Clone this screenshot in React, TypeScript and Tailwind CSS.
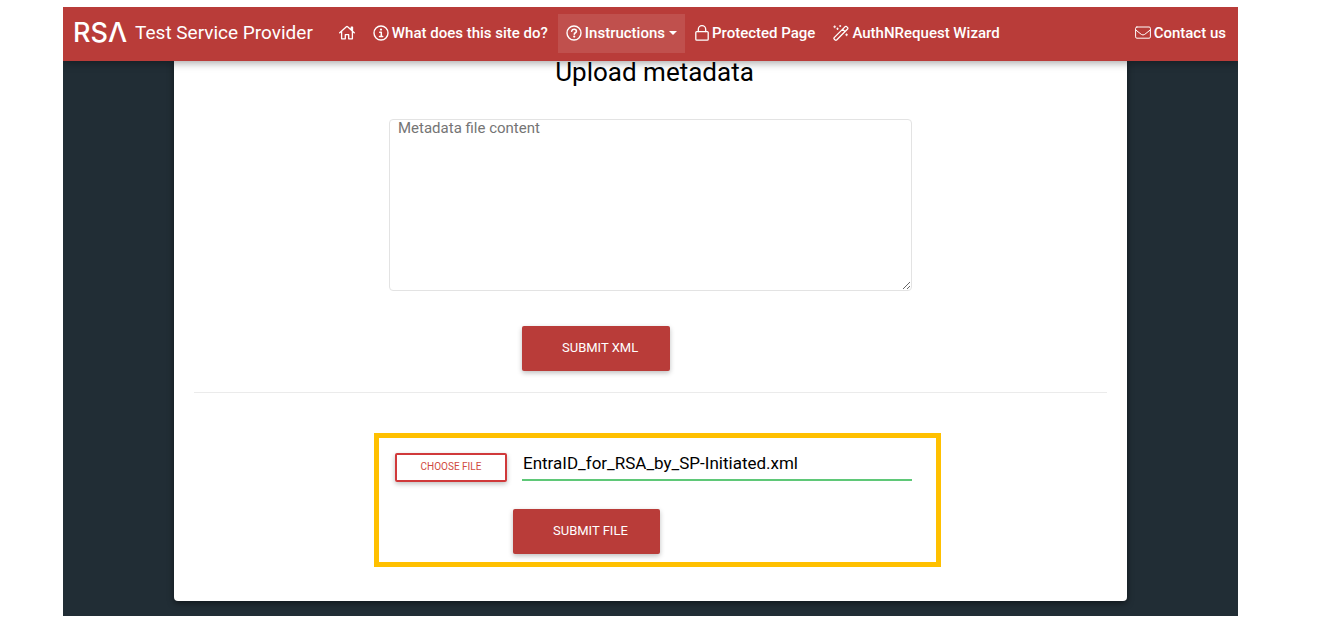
import { useState } from 'react'
import type { ReactNode } from 'react'

interface IconProps {
  children: ReactNode
  width?: number
  className?: string
}

function Icon({ children, width = 16, className = '' }: IconProps) {
  return (
    <svg
      width={width}
      height="16"
      viewBox={`0 0 ${width} 16`}
      fill="none"
      stroke="currentColor"
      strokeWidth="1.3"
      strokeLinecap="round"
      strokeLinejoin="round"
      className={`shrink-0 ${className}`}
      aria-hidden="true"
    >
      {children}
    </svg>
  )
}

function HomeIcon() {
  return (
    <Icon>
      <path d="M.7 7.700 7.400 1.700q.6-.5 1.200 0l6.700 6M2.600 6.500v7.300h3.700V9.700h3.400v4.100h3.700V6.500M12.300 4.500V2.100h1.200V5.500" />
    </Icon>
  )
}

function InfoIcon() {
  return (
    <Icon>
      <circle cx="8" cy="8" r="7" strokeWidth="1.4" />
      <path d="M6.700 7.200h1.600v4M6.500 11.400h3.200" strokeWidth="1.5" />
      <circle cx="8" cy="4.600" r="1.100" fill="currentColor" stroke="none" />
    </Icon>
  )
}

function QuestionIcon() {
  return (
    <Icon>
      <circle cx="8" cy="8" r="7" strokeWidth="1.4" />
      <path d="M5.700 6.100C6 4.900 7 4.300 8.100 4.300c1.300 0 2.300.8 2.300 1.900 0 1.600-2.100 1.500-2.100 3" strokeWidth="1.6" />
      <circle cx="8.200" cy="11.600" r="1.100" fill="currentColor" stroke="none" />
    </Icon>
  )
}

function LockIcon() {
  return (
    <Icon width={14}>
      <rect x=".8" y="6.600" width="12.400" height="8.600" rx="1" />
      <path d="M3.300 6.600V4.400a3.700 3.700 0 0 1 7.400 0v2.200" />
    </Icon>
  )
}

function WandIcon() {
  return (
    <Icon>
      <path d="m1.200 12.600 11-11q.7-.6 1.400 0l1 1q.6.7 0 1.400l-11 11q-.7.6-1.400 0l-1-1q-.6-.7 0-1.400ZM9.600 4.200 12 6.600" />
      <path d="M1.700.8v2M.7 1.800h2M7.200.4v1.200M6.600 1h1.200M4.500 3v1.600M3.700 3.800h1.600M13.600 8.800v2M12.600 9.800h2" strokeWidth=".9" />
    </Icon>
  )
}

function MailIcon() {
  return (
    <Icon>
      <rect x=".6" y="2" width="14.800" height="11.200" rx="1.300" strokeWidth="1" />
      <path d="m.8 5 5.500 4.400q1.700 1.200 3.400 0L15.200 5" strokeWidth="1" />
    </Icon>
  )
}

const navItem = 'flex h-[39px] items-center gap-[3px] px-2 text-[15px] font-medium whitespace-nowrap'
const primaryButton =
  'h-[45px] rounded-[2px] bg-[#b93c39] pr-8 pb-[2px] pl-10 text-[13px] text-white uppercase shadow-[0_2px_5px_rgba(0,0,0,0.25)]'

function Navbar() {
  return (
    <nav className="relative z-10 flex h-[54px] items-center gap-[2px] bg-[#b93c39] pr-1 pb-[2px] pl-[10px] text-white shadow-[0_2px_8px_rgba(0,0,0,0.35)]">
      <a href="#" className="mr-4 flex items-center gap-2 text-[19px] whitespace-nowrap">
        <span className="font-['Inter'] text-[27px] leading-8 font-medium">RSΛ</span>
        Test Service Provider
      </a>
      <a href="#home" aria-label="Home" className={navItem}>
        <HomeIcon />
      </a>
      <a href="#about" className={navItem}>
        <InfoIcon />
        What does this site do?
      </a>
      <button type="button" aria-haspopup="menu" className={`${navItem} bg-white/10`}>
        <QuestionIcon />
        Instructions
        <span className="ml-px border-x-4 border-t-4 border-x-transparent border-t-white" />
      </button>
      <a href="#protected" className={navItem}>
        <LockIcon />
        Protected Page
      </a>
      <a href="#wizard" className={navItem}>
        <WandIcon />
        AuthNRequest Wizard
      </a>
      <a href="#contact" className={`${navItem} ml-auto`}>
        <MailIcon />
        Contact us
      </a>
    </nav>
  )
}

export default function App() {
  const [metadata, setMetadata] = useState('')

  return (
    <div className="bg-white pt-[7px] pr-[94px] pb-[11px] pl-[63px] font-['Roboto',sans-serif]">
      <div className="overflow-clip bg-[#212d35] pb-[15px]">
        <Navbar />
        <main className="mx-[111px] rounded-b-[4px] bg-white px-5 pb-[34px] shadow-[0_2px_6px_rgba(0,0,0,0.5)]">
          <h1 className="pl-2 text-center text-[26px] leading-[22px] text-black">Upload metadata</h1>

          <form className="mx-auto mt-9 max-w-[523px]" onSubmit={(e) => e.preventDefault()}>
            <textarea
              aria-label="Metadata file content"
              placeholder="Metadata file content"
              value={metadata}
              onChange={(e) => setMetadata(e.target.value)}
              className="block h-[172px] w-full rounded-[4px] border border-[#e3e3e3] px-2 text-[15px] leading-4 placeholder:text-[#757575]"
            />
            <button type="submit" className={`${primaryButton} mt-[35px] ml-[133px] block`}>
              Submit XML
            </button>
          </form>

          <hr className="mt-[21px] border-[#ebebeb]" />

          <div className="mx-auto mt-10 max-w-[523px]">
            <form
              className="-mr-[29px] -ml-[15px] border-[5px] border-[#ffc000] pt-[15px] pr-6 pb-[8px] pl-4"
              onSubmit={(e) => e.preventDefault()}
            >
              <div className="flex gap-[15px]">
                <button
                  type="button"
                  className="h-[29px] w-[112px] rounded-[2px] border-2 border-[#d0393a] pb-[2px] text-[10px] text-[#cf4a40] uppercase shadow-[0_2px_5px_rgba(0,0,0,0.25)]"
                >
                  Choose file
                </button>
                <input
                  type="text"
                  aria-label="Metadata file"
                  readOnly
                  value="EntraID_for_RSA_by_SP-Initiated.xml"
                  className="h-[28px] min-w-0 flex-1 border-b-2 border-[#5fc878] pb-[6px] pl-px text-[17px] text-black outline-none"
                />
              </div>
              <button type="submit" className={`${primaryButton} mt-[27px] ml-[118px] block`}>
                Submit file
              </button>
            </form>
          </div>
        </main>
      </div>
    </div>
  )
}
